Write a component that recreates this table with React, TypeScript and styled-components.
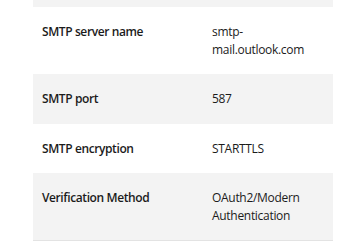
import React from "react";
import styled, { createGlobalStyle } from "styled-components";

const Global = createGlobalStyle`
  html, body { margin: 0; padding: 0; background: #ffffff; }
  body { font-family: "Open Sans", "Noto Sans", sans-serif; color: #1b1b1b; }
`;

const Page = styled.div`
  padding: 0 9px 0 33px;
  width: 342px;
  box-sizing: border-box;
`;

const Table = styled.div`
  display: flex;
  flex-direction: column;
  width: 300px;
  border-bottom: 1px solid #e3e3e3;
`;

const Row = styled.div<{ $shaded: boolean }>`
  display: grid;
  grid-template-columns: 170px 1fr;
  background: ${(p) => (p.$shaded ? "#f3f3f3" : "#ffffff")};
`;

const Strip = styled.div`
  height: 7px;
  background: #f3f3f3;
`;

const Label = styled.div`
  padding: 16px 9px;
  font-size: 12px;
  line-height: 17.5px;
  font-weight: 600;
  letter-spacing: -0.4px;
`;

const Value = styled.div`
  padding: 16px 9px;
  font-size: 12px;
  line-height: 17.5px;
  font-weight: 400;
  letter-spacing: -0.3px;
  width: 100px;
`;

const rows: { label: string; value: React.ReactNode }[] = [
  { label: "SMTP server name", value: "smtp-mail.outlook.com" },
  { label: "SMTP port", value: "587" },
  { label: "SMTP encryption", value: "STARTTLS" },
  { label: "Verification Method", value: "OAuth2/Modern Authentication" },
];

export default function App() {
  return (
    <Page>
      <Global />
      <Table>
        <Strip />
        {rows.map((r, i) => (
          <Row key={r.label} $shaded={i % 2 === 1}>
            <Label>{r.label}</Label>
            <Value>{r.value}</Value>
          </Row>
        ))}
      </Table>
    </Page>
  );
}
